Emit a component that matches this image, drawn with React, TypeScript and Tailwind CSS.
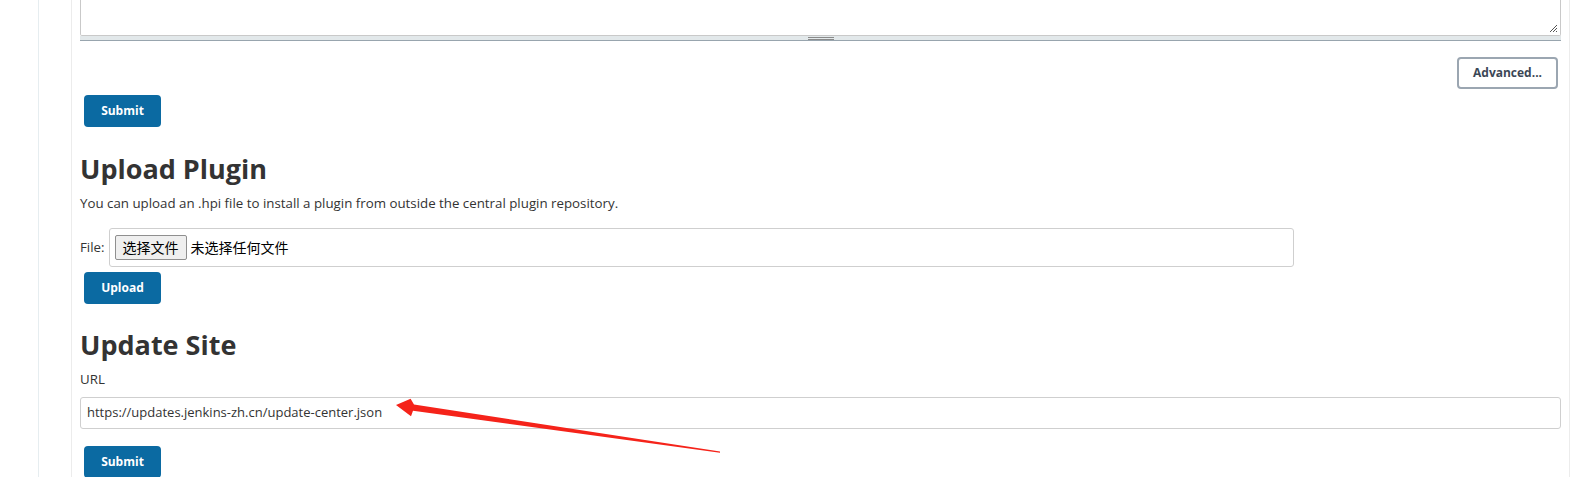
import React from 'react'

const font = { fontFamily: '"Open Sans", "Noto Sans", "Noto Sans CJK SC", sans-serif' }

function BlueButton({ label }: { label: string }) {
  return (
    <button className="ml-[4px] h-[32px] w-[77px] rounded-[4px] bg-[#0b6aa2] text-[12px] font-bold text-white">
      {label}
    </button>
  )
}

function Arrow() {
  // red annotation arrow pointing at the url field
  return (
    <svg className="pointer-events-none absolute left-0 top-0" width="1578" height="477" viewBox="0 0 1578 477">
      <polygon
        points="396,405 410.6,398.8 414,404.6 720,451.4 720,452.8 413,410.8 411,416.2"
        fill="#f5231a"
      />
    </svg>
  )
}

export default function App() {
  return (
    <div className="relative flex h-[477px] w-[1578px] overflow-hidden bg-white text-[#333]" style={font}>
      <div className="w-[39px] shrink-0 border-r border-[#e6edf0]" />
      <div className="w-[32px] shrink-0" />
      <main className="w-[1499px] shrink-0 border-x border-[#ececec] px-[8px]">
        {/* bottom of the textarea, scrolled off the top */}
        <div className="relative h-[36px] rounded-b-[2px] border-x border-b border-[#c9c9c9] bg-white">
          <svg className="absolute bottom-[2px] right-[2px]" width="9" height="9" viewBox="0 0 9 9">
            <path d="M8 1L1 8M8 4L4 8M8 7L7 8" stroke="#555" strokeWidth="1" />
          </svg>
        </div>
        <div className="flex h-[5px] items-center justify-center border-b border-[#98a5ae] bg-[#e2e8ea]">
          <div className="flex w-[26px] flex-col gap-[1px]">
            <div className="h-[1px] bg-[#8a8a8a]" />
            <div className="h-[1px] bg-[#8a8a8a]" />
          </div>
        </div>

        <div className="mt-[16px] flex justify-end pr-[3px]">
          <button className="h-[32px] w-[101px] rounded-[4px] border-2 border-[#9ba6b1] text-[12px] font-bold text-[#3b4756]">
            Advanced...
          </button>
        </div>
        <div className="mt-[6px]">
          <BlueButton label="Submit" />
        </div>

        <h1 className="mt-[24px] text-[27px] font-bold leading-[36px] text-[#333]">Upload Plugin</h1>
        <p className="mt-[7px] text-[13.3px] leading-[18px]">
          You can upload an .hpi file to install a plugin from outside the central plugin repository.
        </p>
        <div className="mt-[16px] flex items-center gap-[4px]">
          <span className="text-[13.3px]">File:</span>
          <div className="flex h-[39px] w-[1185px] items-center gap-[4px] rounded-[3px] border border-[#cfcfcf] pl-[5px]">
            <span className="flex h-[25px] items-center rounded-[2px] border border-[#8f8f8f] bg-[#efefef] px-[7px] text-[14px] text-black">
              选择文件
            </span>
            <span className="text-[14px] text-black">未选择任何文件</span>
          </div>
        </div>
        <div className="mt-[5px]">
          <BlueButton label="Upload" />
        </div>

        <h1 className="mt-[23px] text-[27px] font-bold leading-[36px] text-[#333]">Update Site</h1>
        <div className="mt-[7px] text-[13.3px] font-medium leading-[18px]">URL</div>
        <div className="mt-[9px] flex h-[32px] items-center rounded-[3px] border border-[#cfcfcf] px-[6px] text-[13px]">
          https://updates.jenkins-zh.cn/update-center.json
        </div>
        <div className="mt-[17px]">
          <BlueButton label="Submit" />
        </div>
      </main>
      <Arrow />
    </div>
  )
}
